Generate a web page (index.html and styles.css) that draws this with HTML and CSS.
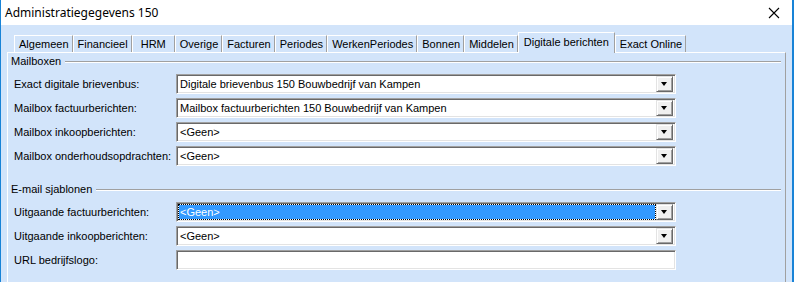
FILE: index.html
```html
<!DOCTYPE html>
<html>
<head>
<meta charset="UTF-8">
<title>Administratiegegevens 150</title>
<link rel="stylesheet" href="styles.css">
</head>
<body>
<div class="window">
	<div class="title-bar">
		<span class="title-text">Administratiegegevens 150</span>
		<svg class="close-btn" width="12" height="12" viewBox="0 0 12 12"><path d="M1 1 L11 11 M11 1 L1 11" stroke="#000" stroke-width="1.1" fill="none"/></svg>
	</div>
	<div class="window-body">
		<div class="tab-row">
			<div class="tab">Algemeen</div>
			<div class="tab">Financieel</div>
			<div class="tab tab-wide">HRM</div>
			<div class="tab">Overige</div>
			<div class="tab">Facturen</div>
			<div class="tab">Periodes</div>
			<div class="tab">WerkenPeriodes</div>
			<div class="tab">Bonnen</div>
			<div class="tab">Middelen</div>
			<div class="tab tab-active">Digitale berichten</div>
			<div class="tab">Exact Online</div>
		</div>
		<div class="tab-page">
			<div class="group-head"><span>Mailboxen</span><i></i></div>
			<div class="form-rows">
				<label>Exact digitale brievenbus:</label>
				<div class="combo"><span class="combo-text">Digitale brievenbus 150 Bouwbedrijf van Kampen</span><b class="drop-btn"></b></div>
				<label>Mailbox factuurberichten:</label>
				<div class="combo"><span class="combo-text">Mailbox factuurberichten 150 Bouwbedrijf van Kampen</span><b class="drop-btn"></b></div>
				<label>Mailbox inkoopberichten:</label>
				<div class="combo"><span class="combo-text">&lt;Geen&gt;</span><b class="drop-btn"></b></div>
				<label>Mailbox onderhoudsopdrachten:</label>
				<div class="combo"><span class="combo-text">&lt;Geen&gt;</span><b class="drop-btn"></b></div>
			</div>
			<div class="group-head group-second"><span>E-mail sjablonen</span><i></i></div>
			<div class="form-rows">
				<label>Uitgaande factuurberichten:</label>
				<div class="combo combo-focus"><span class="combo-text">&lt;Geen&gt;</span><b class="drop-btn"></b></div>
				<label>Uitgaande inkoopberichten:</label>
				<div class="combo"><span class="combo-text">&lt;Geen&gt;</span><b class="drop-btn"></b></div>
				<label>URL bedrijfslogo:</label>
				<div class="combo"><span class="combo-text"></span></div>
			</div>
		</div>
	</div>
</div>
</body>
</html>
```

FILE: styles.css
```css
body{margin: 0;}
.window{
	width: 794px;
	height: 282px;
	box-sizing: border-box;
	border-left: 1px solid #1883d7;
	border-right: 2px solid #1883d7;
	background: #d2e4fa;
	font-family: "Liberation Sans", Arial, sans-serif;
	font-size: 11px;
	color: #000;
	overflow: hidden;
}
.title-bar{
	height: 25px;
	background: #fff;
	display: flex;
	align-items: center;
	justify-content: space-between;
	padding: 0 10px 0 4px;
}
.title-text{
	font-family: "Noto Sans", sans-serif;
	font-size: 12px;
}
.close-btn{
	display: block;
	margin-right: 2px;
}
.window-body{
	padding: 7px 6px 0 6px;
}
.tab-row{
	display: flex;
	align-items: flex-end;
	height: 20px;
	padding-left: 7px;
}
.tab{
	height: 17px;
	line-height: 17px;
	padding: 0 3px 0 4px;
	border-top: 1px solid #fff;
	border-left: 1px solid #fff;
	border-right: 1px solid #a0a0a0;
	box-sizing: border-box;
	white-space: nowrap;
}
.tab-wide{
	padding: 0 8px;
}
.tab-active{
	height: 21px;
	line-height: 18px;
	margin-bottom: -1px;
	position: relative;
	z-index: 1;
	background: #d2e4fa;
	padding: 0 5px;
}
.tab-page{
	border-top: 1px solid #fff;
	border-left: 1px solid #fff;
	border-right: 1px solid #a0a0a0;
	height: 240px;
	padding: 0 4px 0 3px;
}
.group-head{
	display: flex;
	align-items: center;
	height: 15px;
}
.group-head span{
	padding-right: 4px;
}
.group-head i{
	flex: 1;
	border-top: 1px solid #a0a0a0;
	border-bottom: 1px solid #fff;
	margin-top: 2px;
}
.group-second{
	margin-top: 15px;
}
.form-rows{
	display: grid;
	grid-template-columns: 165px 500px;
	row-gap: 4px;
	align-items: center;
	margin-top: 6px;
}
.form-rows label{
	padding-left: 3px;
}
.combo{
	height: 20px;
	box-sizing: border-box;
	background: #fff;
	border-top: 1px solid #a0a0a0;
	border-left: 1px solid #a0a0a0;
	border-bottom: 1px solid #fff;
	border-right: 1px solid #fff;
	box-shadow: inset 1px 1px 0 #696969, inset -1px -1px 0 #e3e3e3;
	display: flex;
	align-items: center;
	padding: 0 2px 0 3px;
}
.combo-text{
	flex: 1;
	white-space: nowrap;
	overflow: hidden;
}
.combo-focus .combo-text{
	background: #3399ff;
	color: #fff;
	outline: 1px dotted #000;
	height: 14px;
	line-height: 14px;
	margin-left: -1px;
	padding-left: 1px;
	margin-right: 1px;
}
.drop-btn{
	width: 17px;
	height: 16px;
	box-sizing: border-box;
	background: #f0f0f0;
	border-top: 1px solid #e3e3e3;
	border-left: 1px solid #e3e3e3;
	border-right: 1px solid #696969;
	border-bottom: 1px solid #696969;
	box-shadow: inset 1px 1px 0 #fff, inset -1px -1px 0 #a0a0a0;
	position: relative;
}
.drop-btn:after{
	content: '';
	position: absolute;
	left: 4px;
	top: 5px;
	border-left: 3.5px solid transparent;
	border-right: 3.5px solid transparent;
	border-top: 4px solid #000;
}
```
